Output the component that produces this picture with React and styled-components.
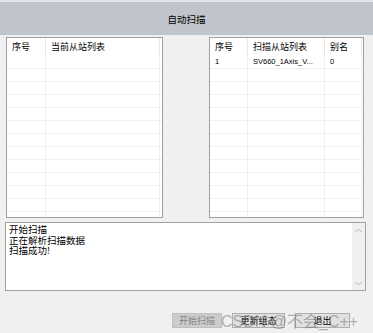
import React from "react";
import styled, { createGlobalStyle } from "styled-components";

const Global = createGlobalStyle`
  html, body { margin: 0; padding: 0; background: #f0f0f0; }
  #root { width: 373px; height: 333px; overflow: hidden; }
`;

const CJK = `"Noto Sans CJK SC", "Liberation Sans", sans-serif`;

const Window = styled.div`
  position: relative;
  width: 373px;
  height: 333px;
  background: #f0f0f0;
  display: flex;
  flex-direction: column;
  font-family: ${CJK};
  color: #000;
`;

const TitleBar = styled.div`
  height: 33px;
  border-top: 2px solid #e4e5e7;
  background: #c0c4cb;
  display: flex;
  align-items: center;
  justify-content: center;
  font-size: 9.5px;
`;

const Body = styled.div`
  flex: 1;
  display: flex;
  flex-direction: column;
  padding: 2px 7px 0 5px;
`;

const Tables = styled.div`
  display: flex;
  justify-content: space-between;
  padding: 0 2px 0 1px;
  height: 181px;
`;

const Grid = styled.div`
  width: ${(p) => p.$w}px;
  height: 181px;
  box-sizing: border-box;
  border: 1px solid #a0a0a0;
  background: #fff;
  overflow: hidden;
  display: grid;
  grid-template-columns: ${(p) => p.$cols};
  grid-auto-rows: 13px;
  grid-template-rows: 18px;
  align-content: start;
`;

const Head = styled.div`
  font-size: 9px;
  line-height: 18px;
  padding-left: 5px;
  border-right: 1px solid ${(p) => (p.$last ? "transparent" : "#e8e8e8")};
  white-space: nowrap;
  overflow: hidden;
`;

const Cell = styled.div`
  font-family: "Liberation Sans", sans-serif;
  font-size: 7.5px;
  line-height: 12px;
  padding-left: 5px;
  border-right: 1px solid ${(p) => (p.$last ? "transparent" : "#f0f0f0")};
  border-bottom: 1px solid #f0f0f0;
  white-space: nowrap;
  overflow: hidden;
  color: #000;
`;

const LogBox = styled.div`
  margin-top: 4px;
  height: 69px;
  box-sizing: border-box;
  border: 1px solid #a0a0a0;
  background: #fff;
  display: flex;
`;

const LogText = styled.div`
  flex: 1;
  padding: 1px 0 0 3px;
  font-size: 9.5px;
  line-height: 10.5px;
  white-space: pre;
`;

const ScrollBar = styled.div`
  width: 13px;
  background: #f0f0f0;
  display: flex;
  flex-direction: column;
  justify-content: space-between;
  align-items: center;
  padding: 5px 0 4px;
`;

const Buttons = styled.div`
  margin-top: 22px;
  display: flex;
  padding-left: 167px;
  gap: 10px;
`;

const Button = styled.div`
  width: ${(p) => p.$w}px;
  height: 15px;
  box-sizing: border-box;
  border: 1px solid ${(p) => (p.$disabled ? "#bfbfbf" : "#adadad")};
  background: ${(p) => (p.$disabled ? "#cccccc" : "#e1e1e1")};
  color: ${(p) => (p.$disabled ? "#838383" : "#000")};
  font-size: 9px;
  line-height: 13px;
  text-align: center;
`;

const Watermark = styled.div`
  position: absolute;
  left: 221px;
  top: 308px;
  font-family: "Liberation Sans", "Noto Sans CJK SC", sans-serif;
  font-size: 16px;
  color: rgba(110, 110, 110, 0.5);
  white-space: nowrap;
  pointer-events: none;
`;

const Chevron = ({ up }) => (
  <svg width="7" height="5" viewBox="0 0 7 5">
    <path
      d={up ? "M0.5 4 L3.5 1 L6.5 4" : "M0.5 1 L3.5 4 L6.5 1"}
      fill="none"
      stroke="#b4b4b4"
      strokeWidth="1"
    />
  </svg>
);

const ROWS = 13;

function Table({ width, cols, heads, data }) {
  const n = heads.length;
  const rows = [];
  for (let r = 0; r < ROWS; r++) {
    const d = data[r] || [];
    for (let c = 0; c <= n; c++) {
      rows.push(
        <Cell key={`${r}-${c}`} $last={c === n}>
          {c < n ? d[c] || "" : ""}
        </Cell>
      );
    }
  }
  return (
    <Grid $w={width} $cols={cols}>
      {heads.map((h) => (
        <Head key={h}>{h}</Head>
      ))}
      <Head $last />
      {rows}
    </Grid>
  );
}

export default function App() {
  return (
    <Window>
      <Global />
      <TitleBar>自动扫描</TitleBar>
      <Body>
        <Tables>
          <Table width={157} cols="39px 114px 1fr" heads={["序号", "当前从站列表"]} data={[]} />
          <Table
            width={155}
            cols="38px 77px 37px 1fr"
            heads={["序号", "扫描从站列表", "别名"]}
            data={[["1", "SV660_1Axis_V...", "0"]]}
          />
        </Tables>
        <LogBox>
          <LogText>{"开始扫描\n正在解析扫描数据\n扫描成功!"}</LogText>
          <ScrollBar>
            <Chevron up />
            <Chevron />
          </ScrollBar>
        </LogBox>
        <Buttons>
          <Button $w={50} $disabled>开始扫描</Button>
          <Button $w={53}>更新组态</Button>
          <Button $w={55}>退出</Button>
        </Buttons>
      </Body>
      <Watermark>CSDN @不会_C++</Watermark>
    </Window>
  );
}
